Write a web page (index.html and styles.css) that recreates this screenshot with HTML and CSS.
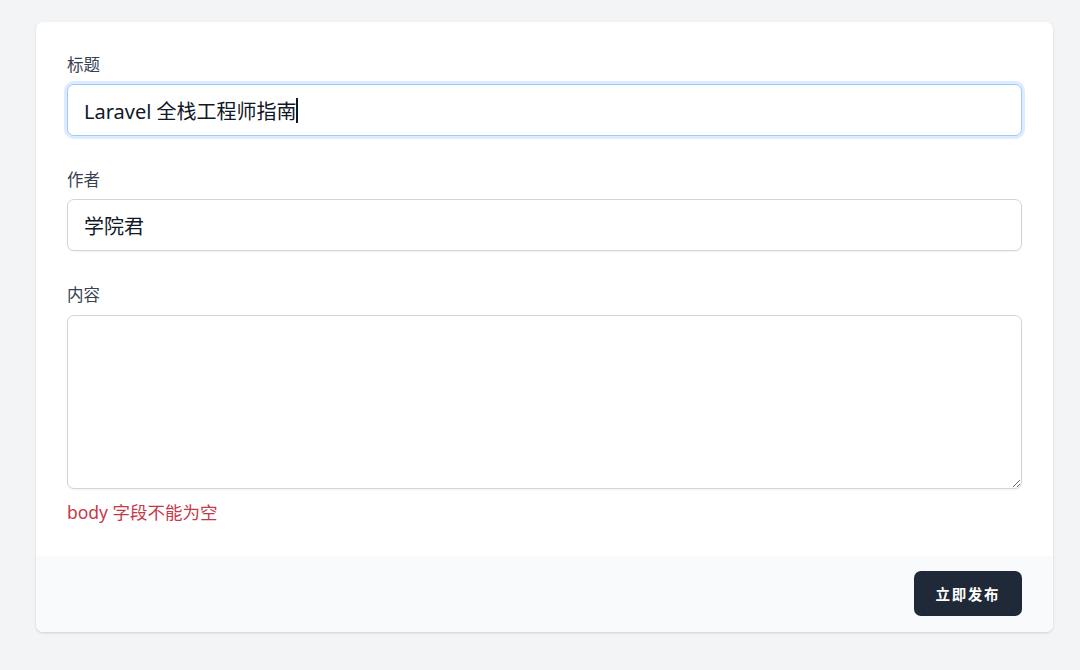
FILE: index.html
```html
<!DOCTYPE html>
<html lang="zh-CN">
<head>
<meta charset="utf-8">
<title>发布文章</title>
<link rel="stylesheet" href="styles.css">
</head>
<body>
<form class="card">
  <div class="card-body">
    <div class="field">
      <label class="label" for="title">标题</label>
      <div class="input-wrap">
        <input class="input input-focus" id="title" type="text" value="Laravel 全栈工程师指南">
        <span class="caret"></span>
      </div>
    </div>
    <div class="field">
      <label class="label" for="author">作者</label>
      <input class="input" id="author" type="text" value="学院君">
    </div>
    <div class="field">
      <label class="label" for="body">内容</label>
      <textarea class="input textarea" id="body"></textarea>
      <p class="error">body 字段不能为空</p>
    </div>
  </div>
  <div class="card-footer">
    <button class="btn" type="button">立即发布</button>
  </div>
</form>
</body>
</html>
```
FILE: styles.css
```css
html, body {
  margin: 0;
  padding: 0;
}
body {
  background: #f3f4f6;
  padding: 22px 27px 0 36px;
  height: 670px;
  box-sizing: border-box;
  font-family: "Noto Sans", "Noto Sans CJK SC", sans-serif;
  color: #374151;
}
.card {
  background: #ffffff;
  border-radius: 7px;
  box-shadow: 0 1px 3px rgba(0,0,0,0.10), 0 1px 2px rgba(0,0,0,0.06);
  overflow: hidden;
  margin: 0;
}
.card-body {
  padding: 31px 31px 32px 31px;
  display: flex;
  flex-direction: column;
  gap: 32px;
}
.field {
  display: flex;
  flex-direction: column;
}
.label {
  display: block;
  font-size: 16.5px;
  line-height: 24px;
  color: #374151;
  margin-bottom: 7px;
}
.input-wrap {
  position: relative;
}
.caret {
  position: absolute;
  left: 229px;
  top: 14px;
  width: 1.5px;
  height: 25px;
  background: #111827;
}
.input {
  display: block;
  box-sizing: border-box;
  width: 100%;
  height: 52px;
  padding: 0 16px;
  border: 1px solid #d1d5db;
  border-radius: 7px;
  background: #fff;
  box-shadow: 0 1px 2px rgba(0,0,0,0.05);
  font-family: "Noto Sans", "Noto Sans CJK SC", sans-serif;
  font-size: 20px;
  color: #111827;
  outline: none;
}
.input-focus {
  border-color: #a4c8f5;
  box-shadow: 0 0 0 3px rgba(191, 219, 254, 0.55);
}
.textarea {
  height: 174px;
  padding: 10px 16px;
  resize: vertical;
  margin-top: 1px;
}
.error {
  margin: 11px 0 0 0;
  font-size: 17.5px;
  line-height: 24px;
  color: #c5394a;
}
.card-footer {
  background: #f9fafb;
  padding: 15px 31px 16px 31px;
  display: flex;
  justify-content: flex-end;
}
.btn {
  height: 45px;
  padding: 0 22px;
  border: none;
  border-radius: 7px;
  background: #1f2937;
  color: #fff;
  font-family: "Noto Sans", "Noto Sans CJK SC", sans-serif;
  font-weight: 700;
  font-size: 14.5px;
  letter-spacing: 1.6px;
}
```
